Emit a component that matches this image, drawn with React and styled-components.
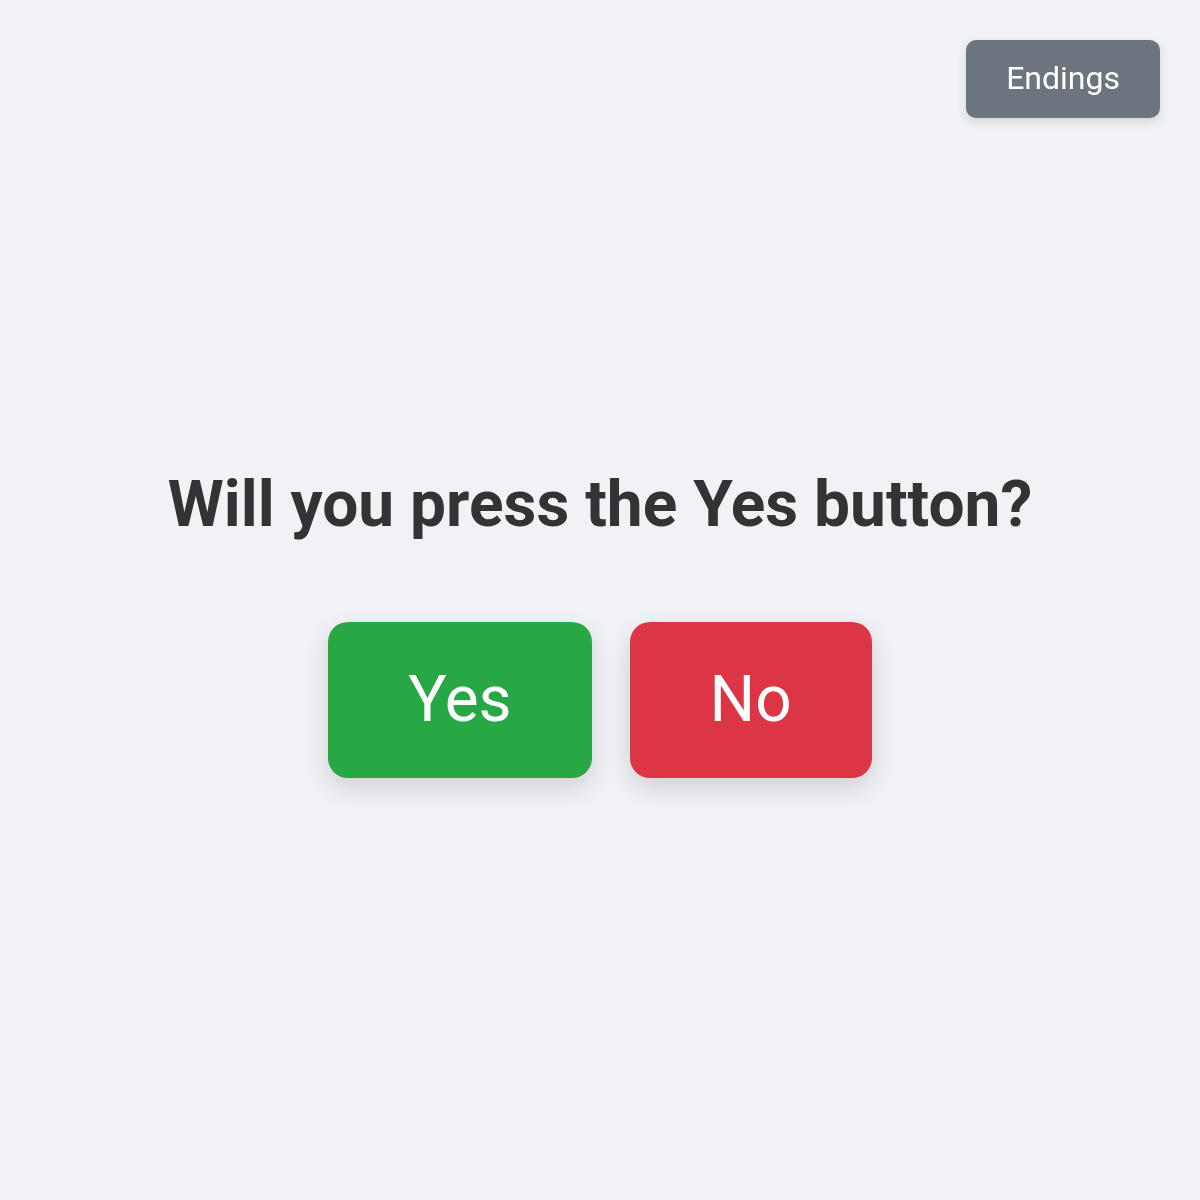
import React from "react";
import styled, { createGlobalStyle } from "styled-components";

const Global = createGlobalStyle`
  html, body { margin: 0; padding: 0; }
  body {
    background: #f0f2f5;
    font-family: Roboto, "Liberation Sans", sans-serif;
  }
`;

const Page = styled.main`
  min-height: 100vh;
  padding-top: 45px;
  display: flex;
  flex-direction: column;
  align-items: center;
  justify-content: center;
  box-sizing: border-box;
`;

const Title = styled.h1`
  margin: 0 0 78px;
  font-size: 64px;
  font-weight: 700;
  color: #333333;
  line-height: 1.2;
`;

const Choices = styled.div`
  display: flex;
  gap: 38px;
`;

const ChoiceButton = styled.button`
  font-family: inherit;
  font-size: 64px;
  font-weight: 400;
  color: #ffffff;
  background: ${(p) => p.$color};
  border: none;
  border-radius: 20px;
  padding: 40px 80px;
  line-height: 1.18;
  box-shadow: 0 10px 24px rgba(0, 0, 0, 0.14);
  cursor: pointer;
`;

const EndingsButton = styled.button`
  position: fixed;
  top: 40px;
  right: 40px;
  font-family: inherit;
  font-size: 32px;
  color: #ffffff;
  background: #6c757d;
  border: none;
  border-radius: 10px;
  padding: 20px 40px;
  line-height: 1.18;
  box-shadow: 0 4px 10px rgba(0, 0, 0, 0.12);
  cursor: pointer;
`;

export default function App() {
  return (
    <>
      <Global />
      <EndingsButton>Endings</EndingsButton>
      <Page>
        <Title>Will you press the Yes button?</Title>
        <Choices>
          <ChoiceButton $color="#28a745">Yes</ChoiceButton>
          <ChoiceButton $color="#dc3545">No</ChoiceButton>
        </Choices>
      </Page>
    </>
  );
}
